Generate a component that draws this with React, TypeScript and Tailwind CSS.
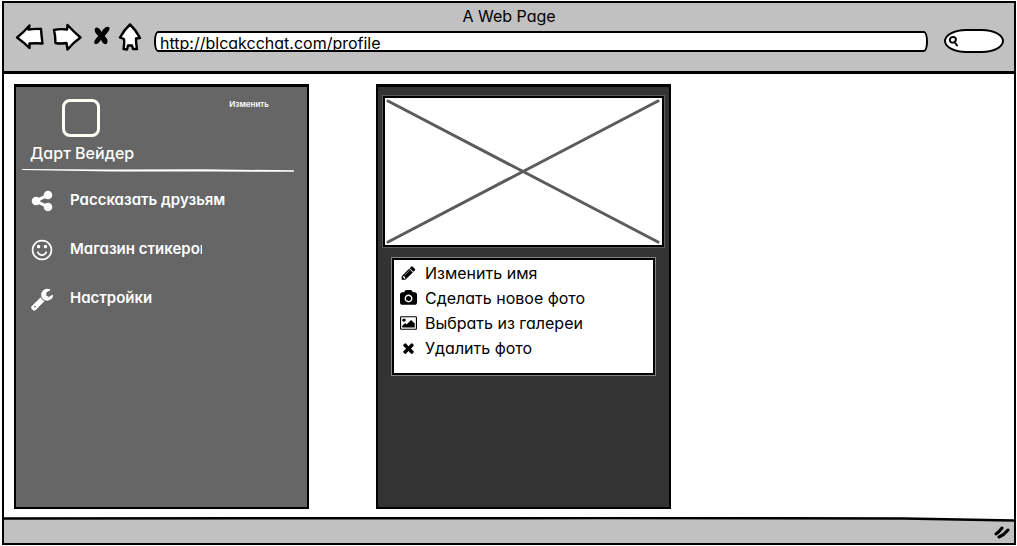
import type { ReactNode } from "react";

type GlyphName = "share" | "smile" | "wrench" | "pencil" | "camera" | "picture" | "times";

const glyphs: Record<GlyphName, { box: string; d: string }> = {
  share: {
    box: "0 0 1792 1792",
    d: "M1344 1024q133 0 226.5 93.5t93.5 226.5-93.5 226.5-226.5 93.5-226.5-93.5-93.5-226.5q0-12 2-34l-360-180q-92 86-218 86-133 0-226.5-93.5t-93.5-226.5 93.5-226.5 226.5-93.5q126 0 218 86l360-180q-2-22-2-34 0-133 93.5-226.5t226.5-93.5 226.5 93.5 93.5 226.5-93.5 226.5-226.5 93.5q-126 0-218-86l-360 180q2 22 2 34t-2 34l360 180q92-86 218-86z",
  },
  smile: {
    box: "0 0 1792 1792",
    d: "M1262 1075q-37 121-138 195t-228 74-228-74-138-195q-8-25 4-48.500t38-31.500q25-8 48.500 4t31.500 38q25 80 92.500 129.500t151.500 49.500 151.500-49.500 92.500-129.500q8-26 32-38t49-4 37 31.500 4 48.500zm-494-435q0 53-37.500 90.500t-90.500 37.500-90.500-37.500-37.500-90.500 37.500-90.500 90.500-37.500 90.500 37.500 37.500 90.500zm512 0q0 53-37.500 90.500t-90.500 37.500-90.500-37.500-37.500-90.500 37.500-90.500 90.500-37.500 90.500 37.500 37.500 90.500zm256 256q0-130-51-248.500t-136.500-204-204-136.500-248.500-51-248.500 51-204 136.500-136.500 204-51 248.500 51 248.500 136.500 204 204 136.500 248.500 51 248.500-51 204-136.500 136.500-204 51-248.500zm128 0q0 209-103 385.500t-279.500 279.500-385.500 103-385.500-103-279.500-279.500-103-385.500 103-385.500 279.500-279.500 385.500-103 385.500 103 279.500 279.500 103 385.500z",
  },
  wrench: {
    box: "0 0 1792 1792",
    d: "M448 1472q0-26-19-45t-45-19-45 19-19 45 19 45 45 19 45-19 19-45zm644-420l-682 682q-37 37-90 37-52 0-91-37l-106-108q-38-36-38-90 0-53 38-91l681-681q39 98 114.500 173.500t173.500 114.500zm634-435q0 39-23 106-47 134-164.500 217.500t-258.500 83.500q-185 0-316.500-131.500t-131.500-316.500 131.500-316.500 316.500-131.500q58 0 121.500 16.500t107.500 46.500q16 11 16 28t-16 28l-293 169v224l193 107q5-3 79-48.500t135.500-81 70.500-35.500q15 0 23.500 10t8.500 25z",
  },
  pencil: {
    box: "0 0 1792 1792",
    d: "M491 1536l91-91-235-235-91 91v107h128v128h107zm523-928q0-22-22-22-10 0-17 7l-542 542q-7 7-7 17 0 22 22 22 10 0 17-7l542-542q7-7 7-17zm-54-192l416 416-832 832h-416v-416zm683 96q0 53-37 90l-166 166-416-416 166-165q36-38 90-38 53 0 91 38l235 234q37 39 37 91z",
  },
  camera: {
    box: "0 0 1920 1792",
    d: "M960 672q119 0 203.500 84.500t84.500 203.500-84.500 203.500-203.500 84.500-203.500-84.500-84.500-203.500 84.500-203.500 203.500-84.500zm704-416q106 0 181 75t75 181v896q0 106-75 181t-181 75h-1408q-106 0-181-75t-75-181v-896q0-106 75-181t181-75h224l51-136q19-49 69.500-84.500t103.500-35.500h512q53 0 103.500 35.500t69.500 84.500l51 136h224zm-704 1152q185 0 316.500-131.500t131.500-316.500-131.500-316.500-316.500-131.500-316.500 131.500-131.500 316.500 131.500 316.500 316.500 131.500z",
  },
  picture: {
    box: "0 0 1920 1792",
    d: "M640 576q0 80-56 136t-136 56-136-56-56-136 56-136 136-56 136 56 56 136zm1024 384v448h-1408v-192l320-320 160 160 512-512zm96-704h-1600q-13 0-22.500 9.500t-9.500 22.500v1216q0 13 9.500 22.500t22.500 9.500h1600q13 0 22.500-9.500t9.500-22.500v-1216q0-13-9.500-22.500t-22.500-9.500zm160 32v1216q0 66-47 113t-113 47h-1600q-66 0-113-47t-47-113v-1216q0-66 47-113t113-47h1600q66 0 113 47t47 113z",
  },
  times: {
    box: "0 0 1792 1792",
    d: "M1490 1322q0 40-28 68l-136 136q-28 28-68 28t-68-28l-294-294-294 294q-28 28-68 28t-68-28l-136-136q-28-28-28-68t28-68l294-294-294-294q-28-28-28-68t28-68l136-136q28-28 68-28t68 28l294 294 294-294q28-28 68-28t68 28l136 136q28 28 28 68t-28 68l-294 294 294 294q28 28 28 68z",
  },
};

function Glyph({ name, className }: { name: GlyphName; className: string }) {
  return (
    <svg viewBox={glyphs[name].box} fill="currentColor" aria-hidden="true" className={className}>
      <path d={glyphs[name].d} />
    </svg>
  );
}

function NavButton({ label, children }: { label: string; children: ReactNode }) {
  return (
    <button type="button" aria-label={label} className="flex items-center justify-center">
      {children}
    </button>
  );
}

function BrowserBar() {
  return (
    <header className="flex h-[71px] shrink-0 flex-col border-b-3 border-black bg-[#c1c1c1]">
      <h1 className="h-5 pt-[3px] text-center text-base leading-5 font-normal">A Web Page</h1>
      <div className="flex items-start px-2.5">
        <nav className="flex h-7 items-center gap-1.5">
          <NavButton label="Back">
            <svg viewBox="14 23 30 28" className="h-7 w-[30px]" fill="#fff" stroke="#000" strokeWidth="2.4" strokeLinejoin="round">
              <path d="M17 37.500 Q23 33 29.500 25.500 L28.500 29.500 Q35 28.500 41 29 Q41.500 36 42.500 43.500 Q36 43 29.500 43.500 L29.500 48 Q24 42.500 17 37.500Z" />
            </svg>
          </NavButton>
          <NavButton label="Forward">
            <svg viewBox="50 23 34 28" className="h-7 w-[34px]" fill="#fff" stroke="#000" strokeWidth="2.4" strokeLinejoin="round">
              <path d="M54 30 Q60 28.500 67 29.500 L67.500 25 Q74 32 80.500 37.500 Q74 42 67.500 49.500 L66.500 43 Q60 44 55.500 43Q55.500 36 54 30Z" />
            </svg>
          </NavButton>
          <NavButton label="Stop">
            <svg viewBox="90 23 22 28" className="h-7 w-[22px]">
              <path d="M95 28.500C96 26.500 99.500 27.500 101.500 32C103.500 27.500 108 25.500 109.500 27.500C110 30 107 33.500 104.500 36C107 38 108.500 41 107 43.500C104.500 45.500 102 42.500 101 39.500C100 42 96.500 45.500 94.500 43.500C93.500 41.500 96 38 98.500 36C96 34 94 31 95 28.500Z" />
            </svg>
          </NavButton>
          <NavButton label="Home">
            <svg viewBox="118 23 24 28" className="h-7 w-6" fill="#fff" stroke="#000" strokeWidth="2.4" strokeLinejoin="round">
              <path d="M130 24.500 Q136 30 140 38 L136 38.500 Q136 44 137 49 L133 49 L132 45.500 L128 45.500 L127 49.500 L123.500 49 Q124.500 44 124 39 L120 37.500 Q124 30 130 24.500Z" />
            </svg>
          </NavButton>
        </nav>
        <div className="mt-2 ml-3 h-[21px] min-w-0 flex-1 overflow-hidden rounded-[4px/10px] border-2 border-black bg-white">
          <input
            aria-label="Address"
            defaultValue="http://blcakcchat.com/profile"
            className="block h-5 w-full bg-transparent px-1 text-base leading-5 outline-none"
          />
        </div>
        <label className="mt-1.5 ml-4 flex h-6 w-[60px] items-center rounded-[22px/12px] border-2 border-black bg-white pl-0.5">
          <svg viewBox="0 0 11 12" className="h-3 w-[11px] shrink-0" fill="none" stroke="#000" strokeWidth="2" strokeLinecap="round">
            <path d="M5 2C2.500 2 1.500 4 2 6C2.500 8 5 8 6.500 7C8 6 8.500 3.500 7 2.500C6.500 2 5.500 2 5 2ZM6.500 7L9 10.500" />
          </svg>
          <input aria-label="Search" type="search" className="w-full min-w-0 bg-transparent text-xs outline-none" />
        </label>
      </div>
    </header>
  );
}

const links: { icon: GlyphName; text: string; width: string }[] = [
  { icon: "share", text: "Рассказать друзьям", width: "w-40" },
  { icon: "smile", text: "Магазин стикеров", width: "w-[132px]" },
  { icon: "wrench", text: "Настройки", width: "w-40" },
];

function ProfilePanel() {
  return (
    <section className="flex w-[295px] flex-col border-2 border-t-3 border-black bg-[#666] px-1.5 pt-3 text-white">
      <div className="flex items-start justify-between pr-8 pl-10">
        <div className="size-[38px] rounded-lg border-3 border-[#fdfdf4]" />
        <button type="button" className="text-[8px] leading-[10px] font-semibold">
          Изменить
        </button>
      </div>
      <h2 className="py-1.5 pl-2 text-base leading-5 font-medium">Дарт Вейдер</h2>
      <svg viewBox="0 0 272 3" preserveAspectRatio="none" className="h-[3px] w-[272px] max-w-full" fill="#fff" aria-hidden="true">
        <path d="M0 0 L90 0.500 L180 0.300 L272 1.300 L272 2.700 L190 2.600 L90 2.500 L0 1Z" />
      </svg>
      <ul className="pt-1 pl-2">
        {links.map(({ icon, text, width }) => (
          <li key={icon}>
            <a href="#" className="flex h-[49px] items-center gap-4">
              <Glyph name={icon} className="size-6 shrink-0" />
              <span className={`${width} overflow-hidden text-[15px] font-semibold whitespace-nowrap`}>{text}</span>
            </a>
          </li>
        ))}
      </ul>
    </section>
  );
}

const actions: { icon: GlyphName; text: string }[] = [
  { icon: "pencil", text: "Изменить имя" },
  { icon: "camera", text: "Сделать новое фото" },
  { icon: "picture", text: "Выбрать из галереи" },
  { icon: "times", text: "Удалить фото" },
];

function PhotoPanel() {
  return (
    <section className="flex w-[295px] flex-col border-2 border-t-3 border-black bg-[#333] px-[5px] pt-[9px]">
      <div className="h-[151px] border-2 border-black bg-white p-px outline-1 outline-white/20">
        <svg viewBox="0 0 276 145" preserveAspectRatio="none" className="size-full" stroke="#5b5b5b" strokeWidth="3" strokeLinecap="round" role="img" aria-label="Photo">
          <path d="M2 2L273 143M273 2L2 143" />
        </svg>
      </div>
      <ul className="mx-[9px] mt-[11px] h-[117px] border-2 border-black bg-white outline-1 outline-white/40">
        {actions.map(({ icon, text }) => (
          <li key={icon}>
            <button type="button" className="flex h-[25px] w-full items-center gap-2 pl-1.5 text-base">
              <Glyph name={icon} className="h-4 w-[17px] shrink-0" />
              {text}
            </button>
          </li>
        ))}
      </ul>
    </section>
  );
}

export default function App() {
  return (
    <div className="flex min-h-screen flex-col bg-white pt-px pr-px pb-px pl-0.5 font-['Inter',sans-serif] text-black [font-feature-settings:'cv11']">
      <div className="flex flex-1 flex-col border-2 border-black">
        <BrowserBar />
        <main className="flex flex-1 gap-[67px] px-2.5 pt-2.5 pb-2">
          <ProfilePanel />
          <PhotoPanel />
        </main>
        <footer className="flex shrink-0 flex-col bg-[#c1c1c1]">
          <svg viewBox="0 0 1010 6" preserveAspectRatio="none" className="h-1.5 w-full" aria-hidden="true">
            <path d="M0 0H1010V4L900 1.500L600 1L0 1.500Z" fill="#fff" />
            <path d="M0 1.500L600 1L900 1.500L1010 3.500" fill="none" stroke="#000" strokeWidth="2.600" />
          </svg>
          <div className="flex h-5 items-start justify-end pt-0.5 pr-1">
            <svg viewBox="0 0 16 14" className="h-3.5 w-4" stroke="#000" strokeWidth="3" strokeLinecap="round" fill="none" aria-hidden="true">
              <path d="M2 9Q5 7 8 3M5 12Q10 10 14 5" />
            </svg>
          </div>
        </footer>
      </div>
    </div>
  );
}
